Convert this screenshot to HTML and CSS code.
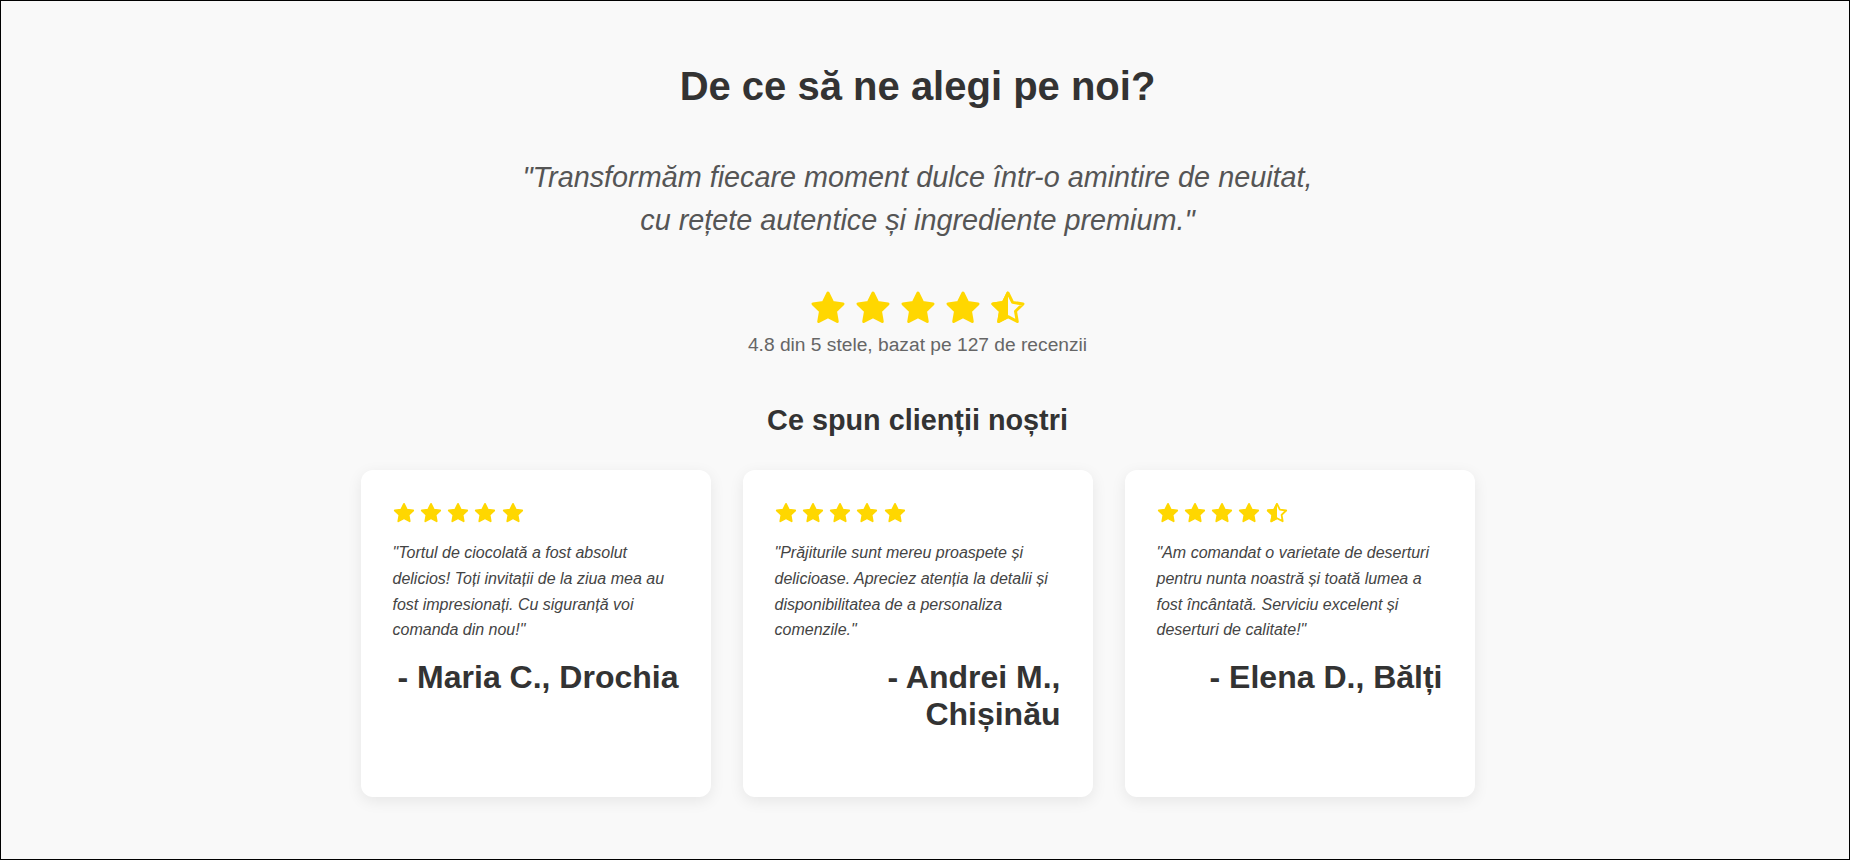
FILE: index.html
```html
<!DOCTYPE html>
<html lang="ro">
<head>
<meta charset="utf-8">
<title>De ce să ne alegi pe noi?</title>
<link rel="stylesheet" href="styles.css">
</head>
<body>
<div class="page">
  <section class="why">
    <h1 class="why-title">De ce să ne alegi pe noi?</h1>
    <p class="why-quote">"Transformăm fiecare moment dulce într-o amintire de neuitat, cu rețete autentice și ingrediente premium."</p>

    <div class="stars stars-big">
      <svg class="star" viewBox="0 0 24 24"><polygon class="star-full" points="12,2 15.09,8.26 22,9.27 17,14.14 18.18,21.02 12,17.77 5.82,21.02 7,14.14 2,9.27 8.91,8.26"/></svg>
      <svg class="star" viewBox="0 0 24 24"><polygon class="star-full" points="12,2 15.09,8.26 22,9.27 17,14.14 18.18,21.02 12,17.77 5.82,21.02 7,14.14 2,9.27 8.91,8.26"/></svg>
      <svg class="star" viewBox="0 0 24 24"><polygon class="star-full" points="12,2 15.09,8.26 22,9.27 17,14.14 18.18,21.02 12,17.77 5.82,21.02 7,14.14 2,9.27 8.91,8.26"/></svg>
      <svg class="star" viewBox="0 0 24 24"><polygon class="star-full" points="12,2 15.09,8.26 22,9.27 17,14.14 18.18,21.02 12,17.77 5.82,21.02 7,14.14 2,9.27 8.91,8.26"/></svg>
      <svg class="star" viewBox="0 0 24 24">
        <defs><clipPath id="half-a"><rect x="0" y="0" width="12" height="24"/></clipPath></defs>
        <polygon class="star-full" clip-path="url(#half-a)" points="12,2 15.09,8.26 22,9.27 17,14.14 18.18,21.02 12,17.77 5.82,21.02 7,14.14 2,9.27 8.91,8.26"/>
        <polygon class="star-line" points="12,2 15.09,8.26 22,9.27 17,14.14 18.18,21.02 12,17.77 5.82,21.02 7,14.14 2,9.27 8.91,8.26"/>
      </svg>
    </div>
    <p class="rating-text">4.8 din 5 stele, bazat pe 127 de recenzii</p>

    <h2 class="reviews-title">Ce spun clienții noștri</h2>

    <div class="reviews">
      <article class="card">
        <div class="stars stars-small">
          <svg class="star" viewBox="0 0 24 24"><polygon class="star-full" points="12,2 15.09,8.26 22,9.27 17,14.14 18.18,21.02 12,17.77 5.82,21.02 7,14.14 2,9.27 8.91,8.26"/></svg>
          <svg class="star" viewBox="0 0 24 24"><polygon class="star-full" points="12,2 15.09,8.26 22,9.27 17,14.14 18.18,21.02 12,17.77 5.82,21.02 7,14.14 2,9.27 8.91,8.26"/></svg>
          <svg class="star" viewBox="0 0 24 24"><polygon class="star-full" points="12,2 15.09,8.26 22,9.27 17,14.14 18.18,21.02 12,17.77 5.82,21.02 7,14.14 2,9.27 8.91,8.26"/></svg>
          <svg class="star" viewBox="0 0 24 24"><polygon class="star-full" points="12,2 15.09,8.26 22,9.27 17,14.14 18.18,21.02 12,17.77 5.82,21.02 7,14.14 2,9.27 8.91,8.26"/></svg>
          <svg class="star" viewBox="0 0 24 24"><polygon class="star-full" points="12,2 15.09,8.26 22,9.27 17,14.14 18.18,21.02 12,17.77 5.82,21.02 7,14.14 2,9.27 8.91,8.26"/></svg>
        </div>
        <p class="card-text">"Tortul de ciocolată a fost absolut delicios! Toți invitații de la ziua mea au fost impresionați. Cu siguranță voi comanda din nou!"</p>
        <p class="card-author">- Maria C., Drochia</p>
      </article>

      <article class="card">
        <div class="stars stars-small">
          <svg class="star" viewBox="0 0 24 24"><polygon class="star-full" points="12,2 15.09,8.26 22,9.27 17,14.14 18.18,21.02 12,17.77 5.82,21.02 7,14.14 2,9.27 8.91,8.26"/></svg>
          <svg class="star" viewBox="0 0 24 24"><polygon class="star-full" points="12,2 15.09,8.26 22,9.27 17,14.14 18.18,21.02 12,17.77 5.82,21.02 7,14.14 2,9.27 8.91,8.26"/></svg>
          <svg class="star" viewBox="0 0 24 24"><polygon class="star-full" points="12,2 15.09,8.26 22,9.27 17,14.14 18.18,21.02 12,17.77 5.82,21.02 7,14.14 2,9.27 8.91,8.26"/></svg>
          <svg class="star" viewBox="0 0 24 24"><polygon class="star-full" points="12,2 15.09,8.26 22,9.27 17,14.14 18.18,21.02 12,17.77 5.82,21.02 7,14.14 2,9.27 8.91,8.26"/></svg>
          <svg class="star" viewBox="0 0 24 24"><polygon class="star-full" points="12,2 15.09,8.26 22,9.27 17,14.14 18.18,21.02 12,17.77 5.82,21.02 7,14.14 2,9.27 8.91,8.26"/></svg>
        </div>
        <p class="card-text">"Prăjiturile sunt mereu proaspete și delicioase. Apreciez atenția la detalii și disponibilitatea de a personaliza comenzile."</p>
        <p class="card-author">- Andrei M., Chișinău</p>
      </article>

      <article class="card">
        <div class="stars stars-small">
          <svg class="star" viewBox="0 0 24 24"><polygon class="star-full" points="12,2 15.09,8.26 22,9.27 17,14.14 18.18,21.02 12,17.77 5.82,21.02 7,14.14 2,9.27 8.91,8.26"/></svg>
          <svg class="star" viewBox="0 0 24 24"><polygon class="star-full" points="12,2 15.09,8.26 22,9.27 17,14.14 18.18,21.02 12,17.77 5.82,21.02 7,14.14 2,9.27 8.91,8.26"/></svg>
          <svg class="star" viewBox="0 0 24 24"><polygon class="star-full" points="12,2 15.09,8.26 22,9.27 17,14.14 18.18,21.02 12,17.77 5.82,21.02 7,14.14 2,9.27 8.91,8.26"/></svg>
          <svg class="star" viewBox="0 0 24 24"><polygon class="star-full" points="12,2 15.09,8.26 22,9.27 17,14.14 18.18,21.02 12,17.77 5.82,21.02 7,14.14 2,9.27 8.91,8.26"/></svg>
          <svg class="star" viewBox="0 0 24 24">
            <defs><clipPath id="half-b"><rect x="0" y="0" width="12" height="24"/></clipPath></defs>
            <polygon class="star-full" clip-path="url(#half-b)" points="12,2 15.09,8.26 22,9.27 17,14.14 18.18,21.02 12,17.77 5.82,21.02 7,14.14 2,9.27 8.91,8.26"/>
            <polygon class="star-line" points="12,2 15.09,8.26 22,9.27 17,14.14 18.18,21.02 12,17.77 5.82,21.02 7,14.14 2,9.27 8.91,8.26"/>
          </svg>
        </div>
        <p class="card-text">"Am comandat o varietate de deserturi pentru nunta noastră și toată lumea a fost încântată. Serviciu excelent și deserturi de calitate!"</p>
        <p class="card-author">- Elena D., Bălți</p>
      </article>
    </div>
  </section>
</div>
</body>
</html>
```

FILE: styles.css
```css
* {
  box-sizing: border-box;
}

html, body {
  margin: 0;
  padding: 0;
}

body {
  font-family: "Liberation Sans", Arial, sans-serif;
  color: #333;
  background: #f9f9f9;
}

.page {
  height: 860px;
  border: 1px solid #000;
  background: #f9f9f9;
  padding: 62px 15px 0 0;
  overflow: hidden;
}

.why {
  text-align: center;
}

.why-title {
  margin: 0;
  font-size: 40px;
  line-height: 46px;
  font-weight: 700;
  color: #333;
}

.why-quote {
  max-width: 800px;
  margin: 47px auto 0;
  font-size: 28.8px;
  line-height: 43.2px;
  font-style: italic;
  color: #555;
}

.stars {
  display: flex;
}

.star {
  display: block;
  flex: none;
}

.star-full {
  fill: #ffd700;
  stroke: #ffd700;
  stroke-width: 2;
  stroke-linejoin: round;
}

.star-line {
  fill: none;
  stroke: #ffd700;
  stroke-width: 2;
  stroke-linejoin: round;
}

.stars-big {
  justify-content: center;
  gap: 9px;
  margin-top: 48px;
}

.stars-big .star {
  width: 36px;
  height: 36px;
}

.rating-text {
  margin: 8px 0 0;
  font-size: 19.2px;
  line-height: 22px;
  color: #666;
}

.reviews-title {
  margin: 48px 0 0;
  font-size: 28.8px;
  line-height: 33px;
  font-weight: 700;
  color: #333;
}

.reviews {
  display: flex;
  justify-content: center;
  gap: 32px;
  margin-top: 33px;
}

.card {
  width: 350px;
  height: 327px;
  padding: 32px;
  background: #fff;
  border-radius: 12px;
  box-shadow: 0 4px 15px rgba(0, 0, 0, 0.08);
  text-align: left;
}

.stars-small {
  gap: 5.3px;
}

.stars-small .star {
  width: 22px;
  height: 22px;
}

.card-text {
  margin: 16px 0 0;
  font-size: 16px;
  line-height: 25.6px;
  font-style: italic;
  color: #444;
}

.card-author {
  margin: 16px 0 0;
  font-size: 32px;
  line-height: 36.8px;
  font-weight: 700;
  color: #333;
  text-align: right;
}
```
